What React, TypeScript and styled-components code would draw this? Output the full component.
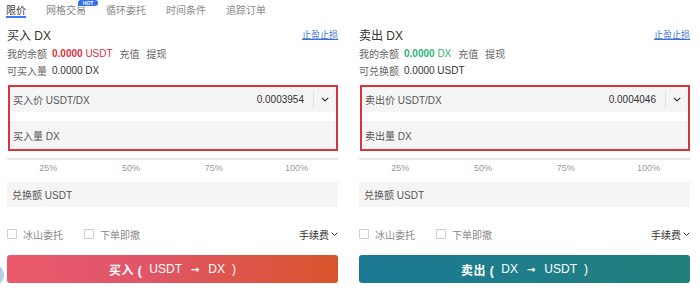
import React from 'react';
import styled, { createGlobalStyle } from 'styled-components';

const GlobalStyle = createGlobalStyle`
  html, body {
    margin: 0;
    padding: 0;
    background: #ffffff;
  }

  body {
    font-family: 'Liberation Sans', 'Noto Sans CJK SC', sans-serif;
    color: #333333;
    width: 700px;
    height: 296px;
    overflow: hidden;
  }
`;

const Page = styled.div`
  position: relative;
  width: 700px;
  height: 296px;
  display: flex;
  flex-direction: column;
`;

const Tabs = styled.div`
  display: flex;
  gap: 20px;
  height: 18px;
  padding-left: 6px;
`;

const Tab = styled.div<{ active?: boolean }>`
  position: relative;
  font-size: 10px;
  line-height: 10px;
  height: 18px;
  padding-top: 6px;
  box-sizing: border-box;
  color: ${(props) => (props.active ? '#333333' : '#8a8a8a')};
  border-bottom: 2px solid ${(props) => (props.active ? '#3d7bf5' : 'transparent')};
`;

const HotBadge = styled.span`
  position: absolute;
  top: 0;
  right: -12px;
  width: 20px;
  height: 6px;
  border-radius: 3px 3px 3px 0;
  background: #2f6ff0;
  color: #ffffff;
  font-size: 5px;
  line-height: 6px;
  text-align: center;
  font-weight: 700;
`;

const Panels = styled.div`
  display: flex;
  gap: 21px;
  padding: 0 10px 0 7px;
`;

const Panel = styled.div`
  width: 331px;
  display: flex;
  flex-direction: column;
`;

const HeaderRow = styled.div`
  display: flex;
  align-items: center;
  justify-content: space-between;
  height: 16px;
  margin-top: 8px;
`;

const Title = styled.div`
  font-size: 12px;
  color: #333333;
`;

const TextLink = styled.a`
  font-size: 9px;
  color: #3d6fd8;
  text-decoration: underline;
  cursor: pointer;
`;

const InfoRow = styled.div<{ top: number }>`
  display: flex;
  align-items: center;
  height: 16px;
  margin-top: ${(props) => props.top}px;
  font-size: 10px;
  color: #666666;
`;

const Amount = styled.span<{ tone: 'red' | 'green' | 'plain' }>`
  margin-left: 5px;
  color: ${(props) =>
    props.tone === 'red' ? '#e0323c' : props.tone === 'green' ? '#2bb673' : '#333333'};

  & > b {
    font-weight: ${(props) => (props.tone === 'plain' ? 400 : 700)};
  }
`;

const Action = styled.span`
  margin-left: 7px;
  color: #666666;
`;

const FocusBox = styled.div`
  margin-top: 7px;
  border: 2px solid #d8343e;
  display: flex;
  flex-direction: column;
  gap: 9px;
  margin-left: 1px;
`;

const Field = styled.div<{ height: number; top?: number; inset?: number }>`
  display: flex;
  align-items: center;
  height: ${(props) => props.height}px;
  margin-top: ${(props) => props.top ?? 0}px;
  padding-left: ${(props) => props.inset ?? 3}px;
  background: #f5f5f5;
  font-size: 10px;
  color: #555555;
`;

const FieldLabel = styled.span`
  flex: 1;
`;

const FieldValue = styled.span`
  color: #333333;
  padding-right: 9px;
`;

const Divider = styled.span`
  width: 1px;
  height: 17px;
  background: #e4e4e4;
`;

const Caret = styled.span`
  width: 22px;
  display: flex;
  justify-content: center;
  align-items: center;
`;

const Track = styled.div`
  margin-top: 7px;
  height: 2px;
  background: #e9e9e9;
`;

const Marks = styled.div`
  display: grid;
  grid-template-columns: repeat(4, 1fr);
  margin-top: 2px;
  height: 12px;
  font-size: 9px;
  line-height: 12px;
  color: #9a9a9a;
  text-align: center;
`;

const OptionRow = styled.div`
  display: flex;
  align-items: center;
  height: 16px;
  margin-top: 19px;
  font-size: 10px;
`;

const Option = styled.label`
  display: flex;
  align-items: center;
  gap: 6px;
  color: #8a8a8a;
  margin-right: 21px;
`;

const Box = styled.span`
  width: 8px;
  height: 8px;
  border: 1px solid #cfcfcf;
  border-radius: 1px;
`;

const Fee = styled.span`
  margin-left: auto;
  display: flex;
  align-items: center;
  gap: 2px;
  color: #333333;
  font-size: 10px;
`;

const SubmitButton = styled.button<{ side: 'buy' | 'sell' }>`
  margin-top: 13px;
  height: 28px;
  border: none;
  border-radius: 3px;
  background: ${(props) =>
    props.side === 'buy'
      ? 'linear-gradient(90deg, #ea5a6c 0%, #e1556a 40%, #d8552b 100%)'
      : 'linear-gradient(90deg, #1b7994 0%, #1e7e8a 50%, #20807a 100%)'};
  color: #ffffff;
  font-family: inherit;
  font-size: 12px;
  display: flex;
  align-items: center;
  justify-content: center;
  gap: 7px;
  cursor: pointer;
`;

const ActionWord = styled.b`
  font-weight: 700;
  letter-spacing: 0.5px;
`;

const Token = styled.span`
  font-weight: 400;
`;

const Arrow = styled.span`
  font-family: 'DejaVu Sans', sans-serif;
  font-weight: 700;
  font-size: 10px;
  margin: 0 2px;
`;

const SideWidget = styled.div`
  position: absolute;
  left: -28px;
  top: 262px;
  width: 32px;
  height: 26px;
  border-radius: 50%;
  background: #b5cdea;
`;

const ChevronIcon = ({ size = 8 }: { size?: number }) => (
  <svg width={size} height={size * 0.6} viewBox="0 0 10 6">
    <polyline points="1,1 5,5 9,1" fill="none" stroke="#333" strokeWidth="1.4" />
  </svg>
);

type Side = {
  side: 'buy' | 'sell';
  title: string;
  balance: string;
  balanceUnit: string;
  availLabel: string;
  availValue: string;
  priceLabel: string;
  price: string;
  amountLabel: string;
  action: string;
  from: string;
  to: string;
};

const sides: Side[] = [
  {
    side: 'buy',
    title: '买入 DX',
    balance: '0.0000',
    balanceUnit: 'USDT',
    availLabel: '可买入量',
    availValue: '0.0000 DX',
    priceLabel: '买入价 USDT/DX',
    price: '0.0003954',
    amountLabel: '买入量 DX',
    action: '买入 (',
    from: 'USDT',
    to: 'DX'
  },
  {
    side: 'sell',
    title: '卖出 DX',
    balance: '0.0000',
    balanceUnit: 'DX',
    availLabel: '可兑换额',
    availValue: '0.0000 USDT',
    priceLabel: '卖出价 USDT/DX',
    price: '0.0004046',
    amountLabel: '卖出量 DX',
    action: '卖出 (',
    from: 'DX',
    to: 'USDT'
  }
];

const TradeForm = ({ data }: { data: Side }) => (
  <Panel>
    <HeaderRow>
      <Title>{data.title}</Title>
      <TextLink>止盈止损</TextLink>
    </HeaderRow>
    <InfoRow top={3}>
      我的余额
      <Amount tone={data.side === 'buy' ? 'red' : 'green'}>
        <b>{data.balance}</b> {data.balanceUnit}
      </Amount>
      <Action>充值</Action>
      <Action>提现</Action>
    </InfoRow>
    <InfoRow top={1}>
      {data.availLabel}
      <Amount tone="plain">
        <b>{data.availValue}</b>
      </Amount>
    </InfoRow>
    <FocusBox>
      <Field height={25}>
        <FieldLabel>{data.priceLabel}</FieldLabel>
        <FieldValue>{data.price}</FieldValue>
        <Divider />
        <Caret>
          <ChevronIcon />
        </Caret>
      </Field>
      <Field height={28}>
        <FieldLabel>{data.amountLabel}</FieldLabel>
      </Field>
    </FocusBox>
    <Track />
    <Marks>
      <span>25%</span>
      <span>50%</span>
      <span>75%</span>
      <span>100%</span>
    </Marks>
    <Field height={25} top={8} inset={5}>
      <FieldLabel>兑换额 USDT</FieldLabel>
    </Field>
    <OptionRow>
      <Option>
        <Box />
        冰山委托
      </Option>
      <Option>
        <Box />
        下单即撤
      </Option>
      <Fee>
        手续费
        <ChevronIcon size={7} />
      </Fee>
    </OptionRow>
    <SubmitButton side={data.side}>
      <ActionWord>{data.action}</ActionWord>
      <Token>{data.from}</Token>
      <Arrow>→</Arrow>
      <Token>{data.to}</Token>
      <Token>)</Token>
    </SubmitButton>
  </Panel>
);

const App = () => (
  <>
    <GlobalStyle />
    <Page>
      <Tabs>
        <Tab active>限价</Tab>
        <Tab>
          网格交易
          <HotBadge>HOT</HotBadge>
        </Tab>
        <Tab>循环委托</Tab>
        <Tab>时间条件</Tab>
        <Tab>追踪订单</Tab>
      </Tabs>
      <Panels>
        {sides.map((s) => (
          <TradeForm key={s.side} data={s} />
        ))}
      </Panels>
      <SideWidget />
    </Page>
  </>
);

export default App;
